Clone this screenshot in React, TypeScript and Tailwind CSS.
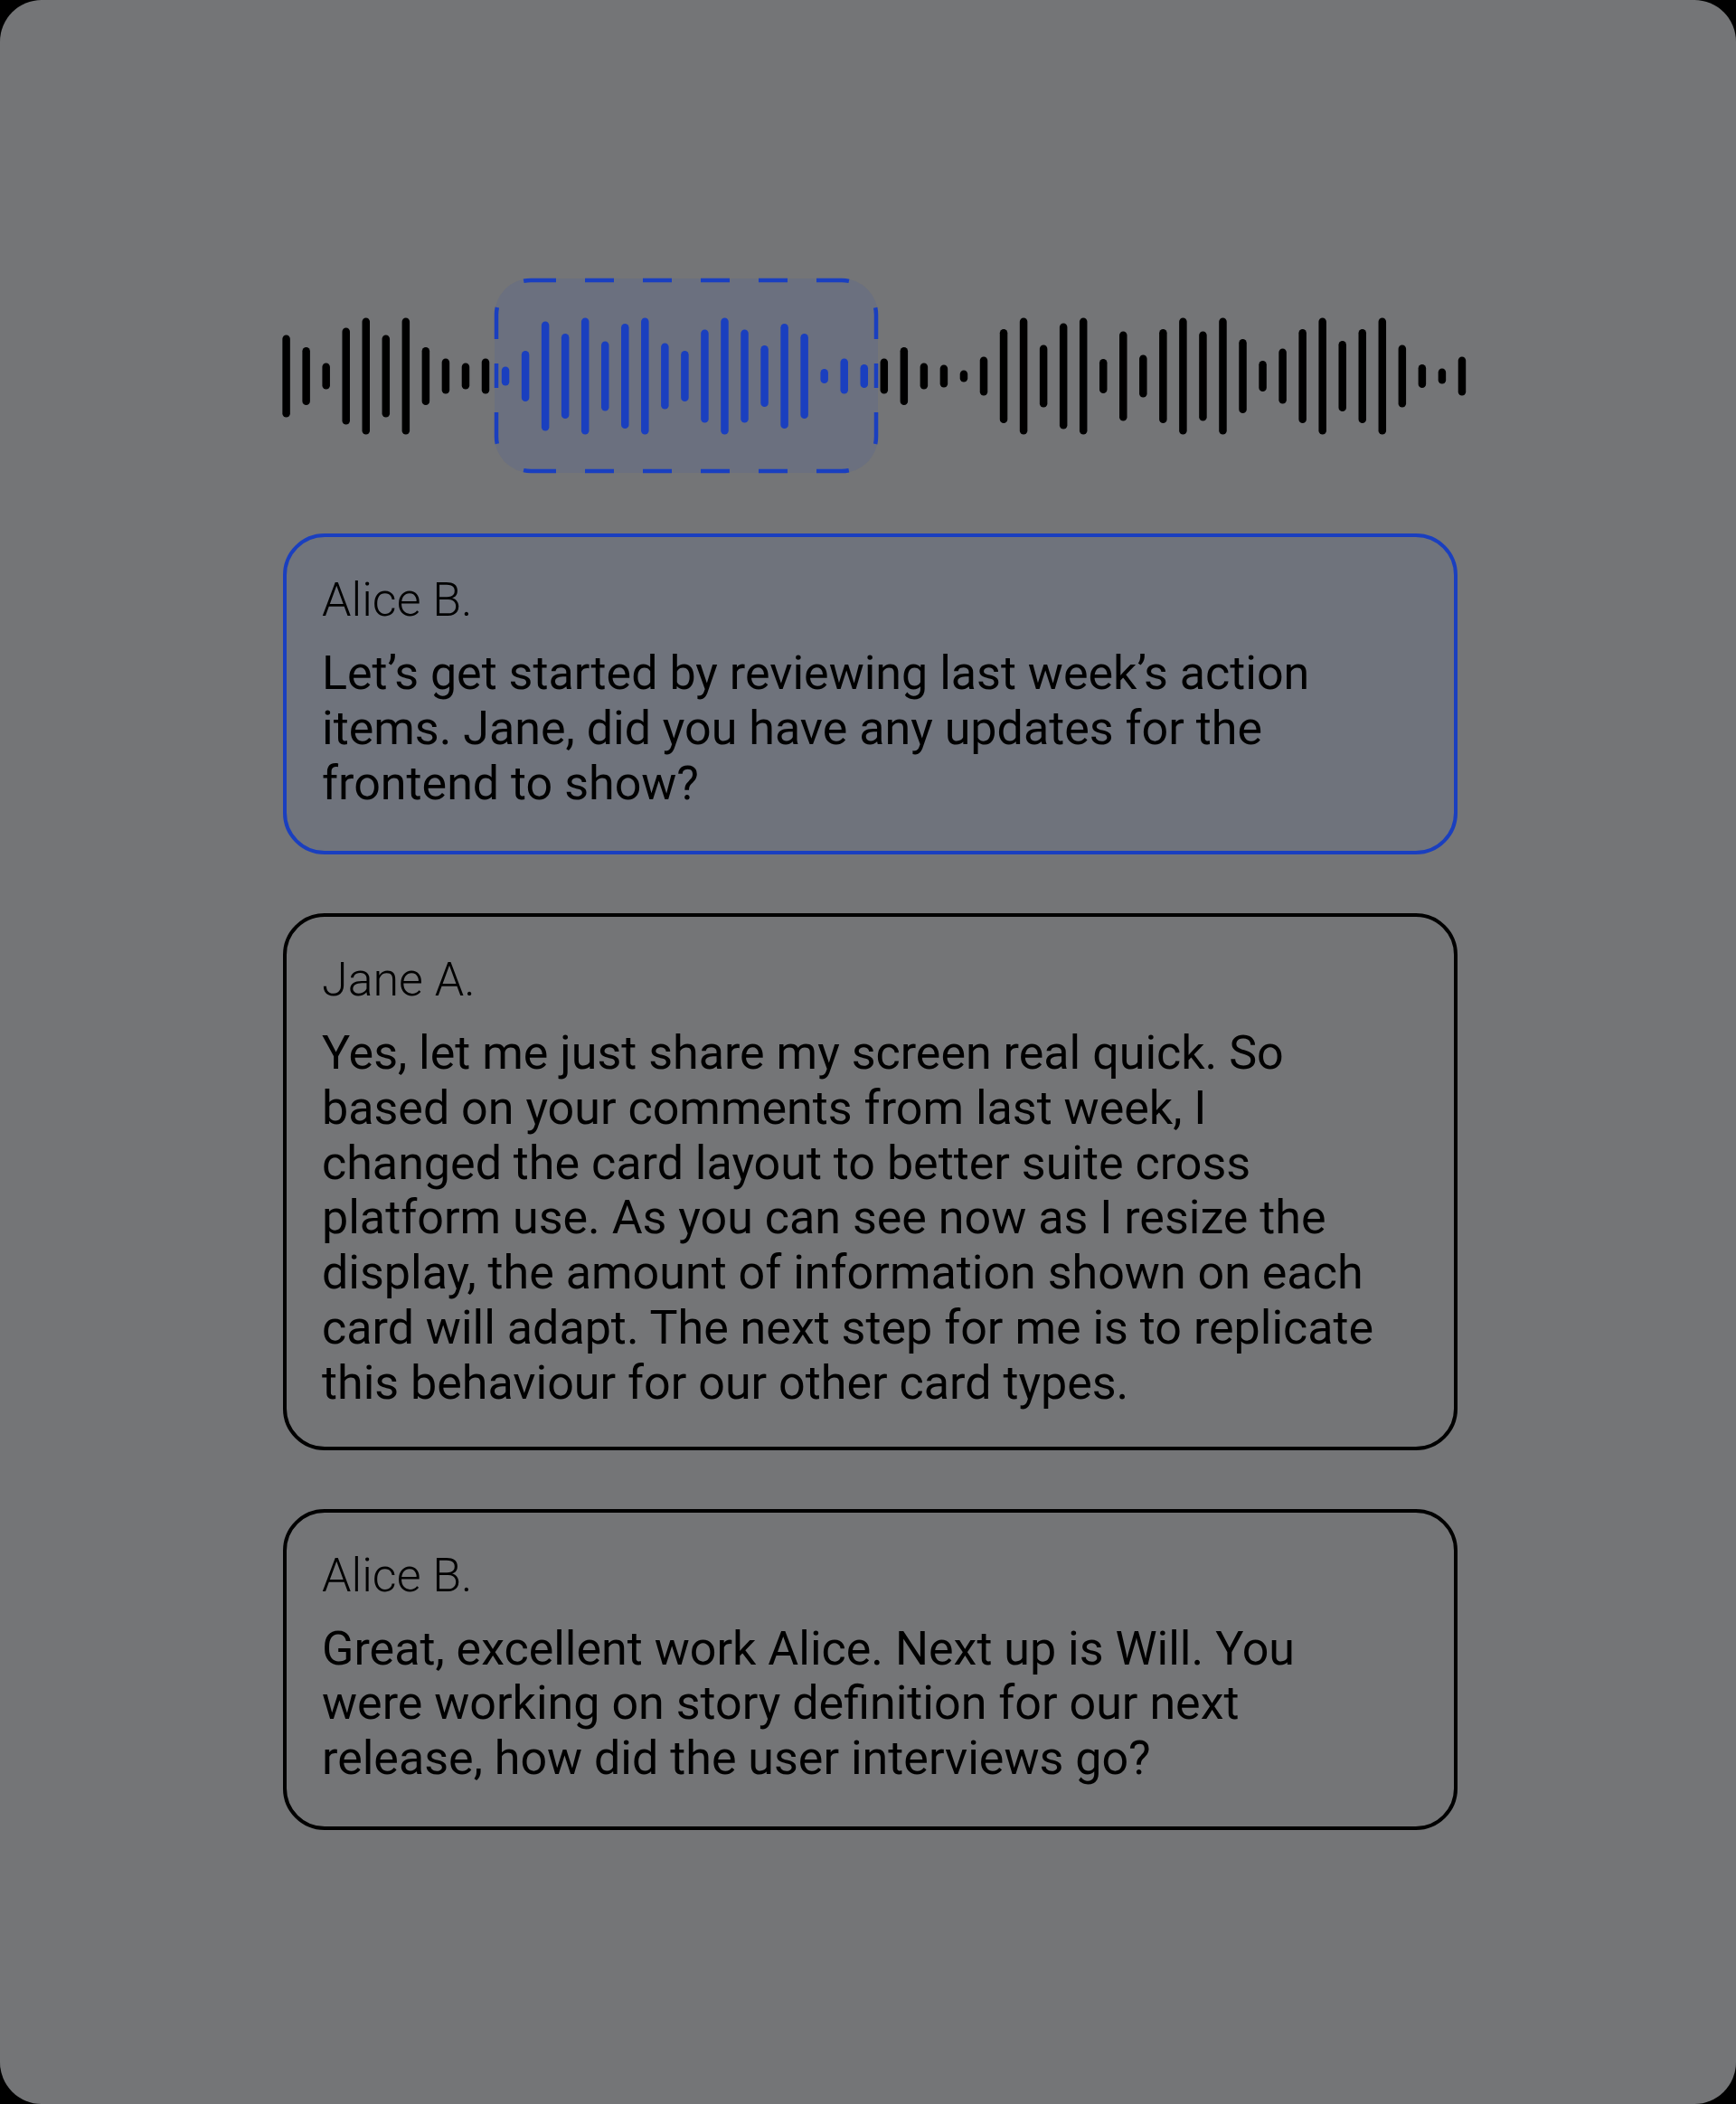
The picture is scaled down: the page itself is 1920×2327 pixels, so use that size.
import React from "react";

const HEIGHTS = [
  91, 64, 29, 107, 129, 91, 129, 64, 39, 29, 39,
  21, 56, 121, 94, 129, 77, 116, 129, 73, 56, 103, 129, 103, 68, 116, 94, 16, 39, 26,
  39, 64, 29, 25, 13, 43, 104, 129, 69, 117, 129, 38, 99, 47, 104, 129, 99, 129, 82, 34,
  61, 104, 129, 78, 104, 129, 69, 26, 17, 43,
];

const X0 = 316.6;
const STEP = 22.04;
const CY = 416;
const BW = 8.5;
const BLUE = "#1a3fbf";

function Waveform() {
  const edge = { stroke: BLUE, strokeWidth: 4.5, fill: "none", strokeLinecap: "butt" as const };
  const arcDash = "8 43.7 8";
  return (
    <svg
      className="block"
      width={1920}
      height={240}
      viewBox="0 296 1920 240"
      xmlns="http://www.w3.org/2000/svg"
    >
      <rect x={547} y={308} width={424} height={215} rx={40} fill="#6b707f" />
      {HEIGHTS.map((h, i) => {
        const cx = X0 + i * STEP;
        const blue = i >= 11 && i <= 29;
        return (
          <rect
            key={i}
            x={cx - BW / 2}
            y={CY - h / 2}
            width={BW}
            height={h}
            rx={BW / 2}
            fill={blue ? BLUE : "#000"}
          />
        );
      })}
      <path d="M587 310 H931" {...edge} strokeDasharray="28 32 32 32 32 32 32 32 32 32 28" />
      <path d="M931 521 H587" {...edge} strokeDasharray="28 32 32 32 32 32 32 32 32 32 28" />
      <path d="M969 348 V483" {...edge} strokeDasharray="27 27 27 27 27" />
      <path d="M549 483 V348" {...edge} strokeDasharray="27 27 27 27 27" />
      <path d="M931 310 A38 38 0 0 1 969 348" {...edge} strokeDasharray={arcDash} />
      <path d="M969 483 A38 38 0 0 1 931 521" {...edge} strokeDasharray={arcDash} />
      <path d="M587 521 A38 38 0 0 1 549 483" {...edge} strokeDasharray={arcDash} />
      <path d="M549 348 A38 38 0 0 1 587 310" {...edge} strokeDasharray={arcDash} />
    </svg>
  );
}

type CardProps = { name: string; text: string; active?: boolean };

function Card({ name, text, active }: CardProps) {
  return (
    <div
      className={
        active
          ? "min-h-[355px] rounded-[46px] border-4 border-[#1a3fbf] bg-[#6f737c] pt-[39px] pb-[39px] pl-[39px] pr-[72px]"
          : "min-h-[355px] rounded-[46px] border-4 border-black pt-[39px] pb-[39px] pl-[39px] pr-[72px]"
      }
    >
      <div className="text-[52px] leading-[61px] font-light text-black">{name}</div>
      <p className="mt-[21px] text-[52px] leading-[60.8px] font-normal text-black">{text}</p>
    </div>
  );
}

export default function App() {
  return (
    <div className="bg-black w-[1920px]" style={{ fontFamily: "Roboto, 'Liberation Sans', sans-serif" }}>
      <div className="w-[1920px] h-[2327px] rounded-[46px] bg-[#747577] pt-[296px] flex flex-col">
        <Waveform />
        <div className="mt-[54px] ml-[313px] w-[1299px] flex flex-col gap-[65px]">
          <Card
            active
            name="Alice B."
            text="Let’s get started by reviewing last week’s action items. Jane, did you have any updates for the frontend to show?"
          />
          <Card
            name="Jane A."
            text="Yes, let me just share my screen real quick. So based on your comments from last week, I changed the card layout to better suite cross platform use. As you can see now as I resize the display, the amount of information shown on each card will adapt. The next step for me is to replicate this behaviour for our other card types."
          />
          <Card
            name="Alice B."
            text="Great, excellent work Alice. Next up is Will. You were working on story definition for our next release, how did the user interviews go?"
          />
        </div>
      </div>
    </div>
  );
}
